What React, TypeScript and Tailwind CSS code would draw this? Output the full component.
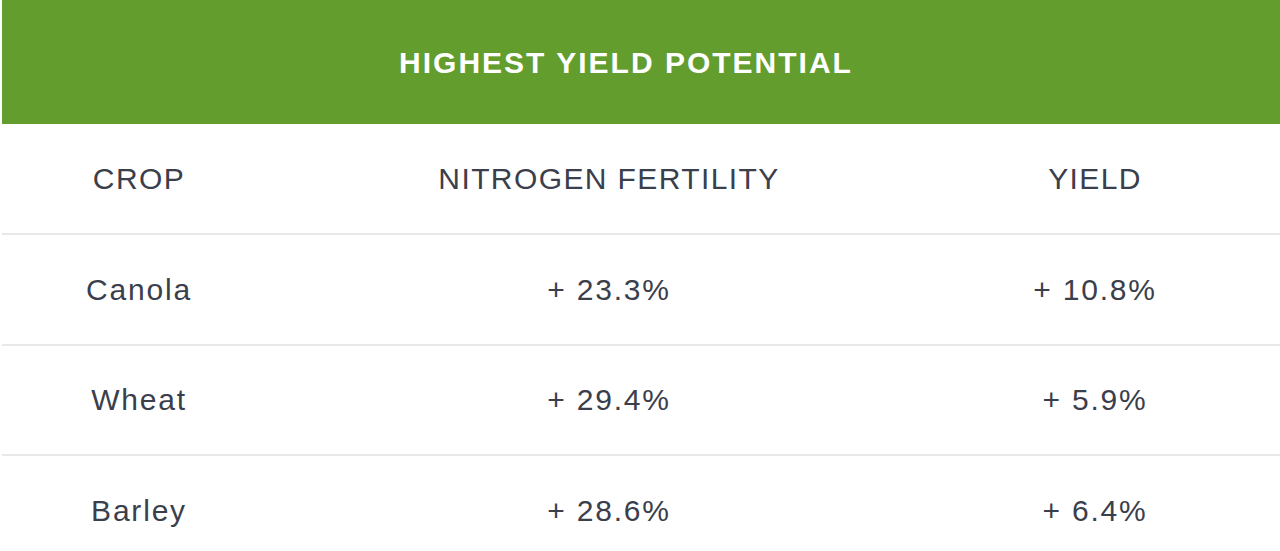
import React from "react";

const rows = [
  { crop: "Canola", nitrogen: "+ 23.3%", yieldValue: "+ 10.8%" },
  { crop: "Wheat", nitrogen: "+ 29.4%", yieldValue: "+ 5.9%" },
  { crop: "Barley", nitrogen: "+ 28.6%", yieldValue: "+ 6.4%" },
];

export default function App() {
  return (
    <div className="h-[551px] w-[1280px] overflow-hidden bg-white font-['Liberation_Sans',Arial,sans-serif]">
      <div className="ml-[2px] w-[1278px]">
        {/* Title bar */}
        <div className="flex h-[124px] items-center bg-[#639d2e]">
          <h2 className="w-[1246px] pl-[2px] text-center text-[30px] font-bold tracking-[2px] text-white">
            HIGHEST YIELD POTENTIAL
          </h2>
        </div>

        {/* Column headings */}
        <div className="grid h-[111px] grid-cols-[274px_666px_306px] items-center border-b-2 border-[#e8e8e8] text-[30px] tracking-[1.4px] text-[#3b3e4b]">
          <div className="text-center">CROP</div>
          <div className="text-center">NITROGEN FERTILITY</div>
          <div className="text-center">YIELD</div>
        </div>

        {rows.map((row) => (
          <div
            key={row.crop}
            className="grid h-[110.5px] grid-cols-[274px_666px_306px] items-center border-b-2 border-[#e8e8e8] text-[30px] tracking-[1.8px] text-[#3b3e4b]"
          >
            <div className="text-center">{row.crop}</div>
            <div className="text-center">{row.nitrogen}</div>
            <div className="text-center">{row.yieldValue}</div>
          </div>
        ))}
      </div>
    </div>
  );
}
